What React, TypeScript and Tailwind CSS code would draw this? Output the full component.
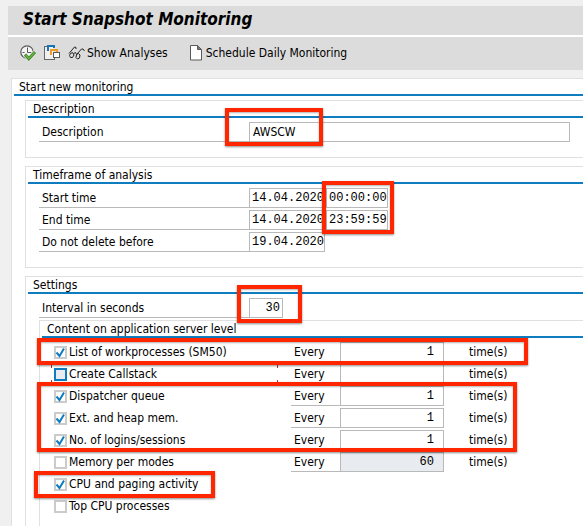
import React from "react";

function Highlight({ className }: { className: string }) {
  return (
    <span
      aria-hidden="true"
      className={`pointer-events-none absolute z-10 border-4 border-[#ff2600] shadow-[0_1px_2px_rgba(0,0,0,0.45),inset_0_1px_2px_rgba(0,0,0,0.3)] ${className}`}
    />
  );
}

function ExecuteIcon() {
  return (
    <svg width="16" height="16" viewBox="0 0 16 16" fill="none" aria-hidden="true">
      <circle cx="7" cy="7" r="6.200" fill="#f4f4f4" stroke="#5a5a5a" strokeWidth="1.200" />
      <path d="M7.500 2.500v5h4M2.500 7.500h2M7.500 10v2" stroke="#5a5a5a" />
      <path d="M5 9.500l3.800 4.300L15 7" stroke="#e8e8e8" strokeWidth="4.500" />
      <path d="M5 9.500l3.800 4.300L15 7" stroke="#3f8a28" strokeWidth="3" />
      <path d="M5.500 10l3.300 3.700L14.500 7.500" stroke="#6db648" strokeWidth="1.200" />
    </svg>
  );
}

function VariantIcon() {
  return (
    <svg width="16" height="16" viewBox="0 0 16 16" fill="none" shapeRendering="crispEdges" aria-hidden="true">
      <path d="M1 2h9v12H1z" fill="#f0f0f0" />
      <path d="M2.500 1.500h-2v13h10v-2" stroke="#666" />
      <path d="M4 6V1h6v2" stroke="#1873b4" strokeWidth="2" />
      <path d="M7 10V5h6v2" stroke="#f09a28" strokeWidth="2" />
      <path d="M9.500 7.500h6v5h-6z" fill="#fff" stroke="#5a5a5a" />
    </svg>
  );
}

function GlassesIcon() {
  return (
    <svg width="17" height="16" viewBox="0 0 17 16" fill="none" stroke="#222" aria-hidden="true">
      <path d="M1 8.500l5.500-6.500 1.500 .5v1.500M9 9l4.500-5 1.500 0 1.500 2" />
      <path d="M4.500 7.500L2.500 8.500 1.500 10.500l1 2h2l1.500-2.500z" />
      <path d="M10.500 8.500L8.500 9.500l-.5 3 1.500 1.500 2-1 .5-3z" />
      <path d="M5.500 8.500L7.500 7.500l1 2" />
    </svg>
  );
}

function PageIcon() {
  return (
    <svg width="12" height="16" viewBox="0 0 12 16" fill="none" aria-hidden="true">
      <path d="M.5 .5h7l4 4v10.500H.5z" fill="#fff" stroke="#5a5a5a" />
      <path d="M7.500 .5v4h4z" fill="#777" stroke="#5a5a5a" />
    </svg>
  );
}

function Group({ title, className, children }: { title: string; className: string; children: React.ReactNode }) {
  return (
    <section className={`border-t border-l border-[#e0e0e0] pl-0.5 ${className}`}>
      <h2 className="h-[17px] border-b-2 border-[#0f7cc0] pl-[5px] leading-4">{title}</h2>
      {children}
    </section>
  );
}

const field = "h-5 border border-[#b9b9b9] font-['Liberation_Mono',monospace] text-xs leading-[18px] outline-none";

function FieldRow({ id, label, children }: { id: string; label: string; children: React.ReactNode }) {
  return (
    <div className="flex h-5">
      <label htmlFor={id} className="w-[210px] shrink-0 border-b border-[#b9b9b9] pl-[3px] leading-[21px]">
        {label}
      </label>
      {children}
    </div>
  );
}

type Item = { id: string; label: string; checked?: boolean; value?: string; locked?: boolean; focused?: boolean };

function CheckRow({ item }: { item: Item }) {
  return (
    <div className="flex h-5 items-center">
      <div className="relative flex h-5 w-[240px] shrink-0 items-center gap-0.5 pl-[3px]">
        {item.focused && (
          <span
            aria-hidden="true"
            className="absolute inset-y-0 left-0 w-[227px] border-x border-[#c03020] [mask-image:linear-gradient(black_4px,transparent_4px,transparent_16px,black_16px)]"
          />
        )}
        <span className="relative h-[13px] w-[13px]">
          <input
            id={item.id}
            type="checkbox"
            defaultChecked={item.checked}
            className={`peer block h-[13px] w-[13px] appearance-none border-2 ${item.focused ? "border-[#0f7cc0] bg-[#e8ecf0]" : "border-[#cbcbcb] bg-white"}`}
          />
          <svg viewBox="0 0 13 13" fill="none" aria-hidden="true" className="pointer-events-none absolute inset-0 hidden peer-checked:block">
            <path d="M2.500 6.500l3 3.500 4.500-7.500" stroke="#0f7cc0" strokeWidth="2" />
          </svg>
        </span>
        <label htmlFor={item.id} className="leading-[21px]">{item.label}</label>
      </div>
      {item.value !== undefined && (
        <>
          <label htmlFor={`${item.id}-every`} className="h-5 w-[49px] shrink-0 border-b border-[#b9b9b9] pl-[3px] leading-[21px]">
            Every
          </label>
          <input
            id={`${item.id}-every`}
            defaultValue={item.value}
            readOnly={item.locked}
            className={`${field} w-[104px] shrink-0 pr-[9px] text-right ${item.locked ? "bg-[#e8ecf0]" : "bg-white"}`}
          />
          <span className="pl-[25px] leading-[21px]">time(s)</span>
        </>
      )}
    </div>
  );
}

export default function App() {
  return (
    <main className="min-h-screen overflow-hidden bg-[#f0f0f0] pt-1.5 pl-2 font-['DejaVu_Sans_Condensed','DejaVu_Sans',sans-serif] text-xs text-black">
      <header className="bg-[#dcdcdc]">
        <h1 className="h-[31px] border-b-2 border-white pl-[15px] text-[17px] leading-[27px] font-bold italic">
          Start Snapshot Monitoring
        </h1>
        <nav className="flex h-[33px] items-center pb-0.5 pl-3">
          <button type="button" aria-label="Execute"><ExecuteIcon /></button>
          <button type="button" aria-label="Get variant" className="ml-2"><VariantIcon /></button>
          <button type="button" className="ml-2 flex items-center gap-0.5"><GlassesIcon />Show Analyses</button>
          <button type="button" className="ml-[22px] flex items-center gap-1"><PageIcon />Schedule Daily Monitoring</button>
        </nav>
      </header>

      <Group title="Start new monitoring" className="mt-2 ml-[3px] bg-white">
        <div className="mt-1 ml-[11px] flex flex-col gap-2">
          <Group title="Description" className="border-b pb-[15px]">
            <div className="relative mt-1 mr-[13px] ml-[11px]">
              <FieldRow id="description" label="Description">
                <input id="description" defaultValue="AWSCW" className="h-5 min-w-0 flex-1 border border-[#b9b9b9] px-[3px] outline-none" />
              </FieldRow>
              <Highlight className="-top-3.5 left-[186px] h-[38px] w-[98px]" />
            </div>
          </Group>

          <Group title="Timeframe of analysis" className="border-b pb-[15px]">
            <div className="relative mt-1 ml-[11px] flex flex-col gap-0.5">
              <FieldRow id="start-date" label="Start time">
                <input id="start-date" defaultValue="14.04.2020" className={`${field} w-[76px] pl-0.5`} />
                <input aria-label="Start clock time" defaultValue="00:00:00" className={`${field} ml-px w-[62px] pl-0.5`} />
              </FieldRow>
              <FieldRow id="end-date" label="End time">
                <input id="end-date" defaultValue="14.04.2020" className={`${field} w-[76px] pl-0.5`} />
                <input aria-label="End clock time" defaultValue="23:59:59" className={`${field} ml-px w-[62px] pl-0.5`} />
              </FieldRow>
              <FieldRow id="keep-date" label="Do not delete before">
                <input id="keep-date" defaultValue="19.04.2020" className={`${field} w-[76px] pl-0.5`} />
              </FieldRow>
              <Highlight className="-top-[7px] left-[283px] h-[53px] w-[72px]" />
            </div>
          </Group>

          <Group title="Settings" className="">
            <div className="relative mt-1 ml-[11px]">
              <FieldRow id="interval" label="Interval in seconds">
                <input id="interval" defaultValue="30" className={`${field} w-[34px] pr-0.5 text-right`} />
              </FieldRow>
              <Highlight className="-top-[13px] left-[198px] h-[38px] w-[65px]" />
            </div>
            <div className="mt-0.5 ml-[11px]">
              <Group title="Content on application server level" className="pb-2.5">
                <div className="mt-1 ml-[9px] flex flex-col gap-0.5">
                  <div className="relative">
                    <CheckRow item={{ id: "workprocesses", label: "List of workprocesses (SM50)", checked: true, value: "1" }} />
                    <Highlight className="-top-1 -left-3.5 h-[27px] w-[491px]" />
                  </div>
                  <CheckRow item={{ id: "callstack", label: "Create Callstack", value: "", focused: true }} />
                  <div className="relative flex flex-col gap-0.5">
                    <CheckRow item={{ id: "dispatcher", label: "Dispatcher queue", checked: true, value: "1" }} />
                    <CheckRow item={{ id: "memory", label: "Ext. and heap mem.", checked: true, value: "1" }} />
                    <CheckRow item={{ id: "logins", label: "No. of logins/sessions", checked: true, value: "1" }} />
                    <Highlight className="-top-1 -left-3.5 h-[70px] w-[480px]" />
                  </div>
                  <CheckRow item={{ id: "modes", label: "Memory per modes", value: "60", locked: true }} />
                  <div className="relative">
                    <CheckRow item={{ id: "cpu", label: "CPU and paging activity", checked: true }} />
                    <Highlight className="-top-[3px] -left-[17px] h-[27px] w-[181px]" />
                  </div>
                  <CheckRow item={{ id: "top-cpu", label: "Top CPU processes" }} />
                </div>
              </Group>
            </div>
          </Group>
        </div>
      </Group>
    </main>
  );
}
